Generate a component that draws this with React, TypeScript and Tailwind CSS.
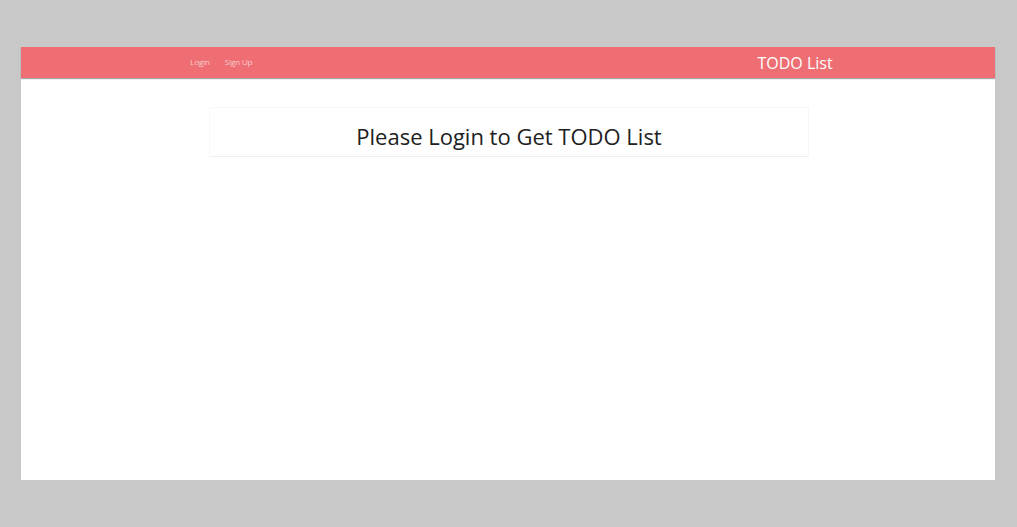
export default function App() {
  return (
    <div className="flex min-h-screen flex-col bg-[#c8c8c8] pt-[47px] pr-[22px] pb-[47px] pl-[21px] font-['Open_Sans','Noto_Sans',sans-serif]">
      <div className="flex-1 bg-white">
        <header className="bg-[#ee6e73] shadow-[0_1px_1px_rgba(0,0,0,0.35)]">
          <div className="mx-auto flex h-[31px] w-2/3 items-center justify-between text-white">
            <nav className="flex gap-[15px] pb-[2px] pl-[7px] text-[8px] leading-none font-light">
              <a href="#login">Login</a>
              <a href="#signup">Sign Up</a>
            </nav>
            <a href="#home" className="text-base">TODO List</a>
          </div>
        </header>
        <div className="pt-[29px] pl-[2px]">
          <main className="mx-auto w-[600px] max-w-full border border-[#f7f7f7] border-b-[#eeeeee] px-2 pt-3 pb-1">
            <h1 className="text-center text-[22px] leading-8 text-[#212121]">Please Login to Get TODO List</h1>
          </main>
        </div>
      </div>
    </div>
  );
}
